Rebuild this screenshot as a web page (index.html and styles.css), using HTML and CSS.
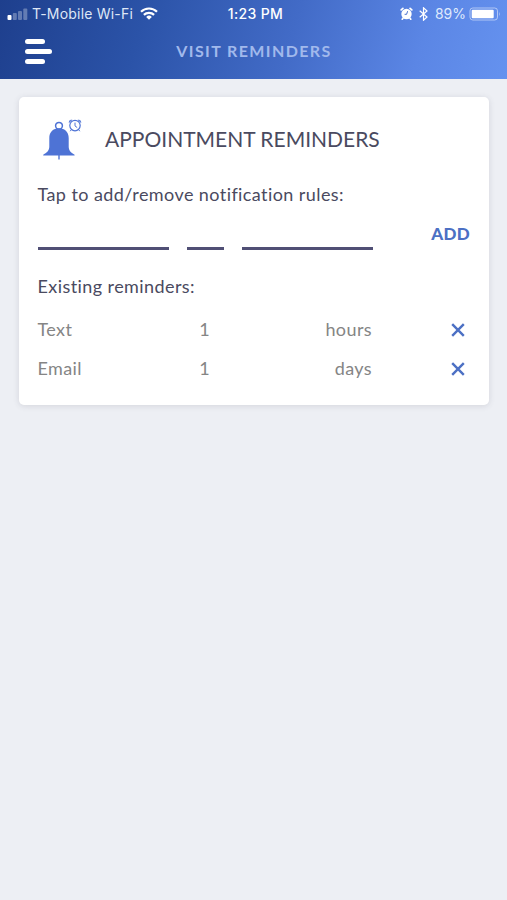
FILE: index.html
```html
<!DOCTYPE html>
<html lang="en">
<head>
<meta charset="utf-8">
<title>Visit Reminders</title>
<link rel="stylesheet" href="styles.css">
</head>
<body>
<header class="header">
  <div class="status">
    <div class="status-left">
      <svg class="signal" width="21" height="12" viewBox="0 0 21 12" fill="#fff"><rect x="0.5" y="7" width="4" height="5" rx="1"/><g opacity=".3"><rect x="5.800" y="5" width="4" height="7" rx="1"/><rect x="11" y="3" width="4" height="9" rx="1"/><rect x="16.300" y="0.500" width="4" height="11.500" rx="1"/></g></svg>
      <span class="carrier">T-Mobile Wi-Fi</span>
      <svg class="wifi" width="18" height="13" viewBox="0 0 18 13" fill="none" stroke="#fff" stroke-width="2.200"><path d="M1 4.800a11.300 11.300 0 0 1 16 0M3.900 7.900a7.200 7.200 0 0 1 10.200 0"/><path d="M9 12.700 6.200 9.900a4 4 0 0 1 5.600 0z" fill="#fff" stroke="none"/></svg>
    </div>
    <span class="time">1:23 PM</span>
    <div class="status-right">
      <svg class="alarm" width="13" height="13" viewBox="0 0 13 13"><circle cx="6.500" cy="7" r="5.200" fill="#fff"/><path d="M1.200 2.900 2.900 1.400M11.800 2.900 10.100 1.400M3 11.200l-.8 1M10 11.200l.8 1" stroke="#fff" stroke-width="1.700" stroke-linecap="round"/><path d="M7.600 4.200 6.600 7.300H4.600" fill="none" stroke="#4a72cf" stroke-width="1"/></svg>
      <svg class="bluetooth" width="9" height="14" viewBox="0 0 9 14" fill="none" stroke="#fff" stroke-width="1.200"><path d="M.700 3.700 8 10 4.500 13.200V.800L8 4 .700 10.300"/></svg>
      <span class="percent">89%</span>
      <svg class="battery" width="32" height="14" viewBox="0 0 32 14"><rect x="1" y="1" width="27.500" height="12" rx="2.800" fill="none" stroke="#fff" stroke-opacity=".5"/><rect x="2.700" y="2.800" width="22" height="8.400" rx="1" fill="#fff"/><path d="M30 4.700q1.600 2.300 0 4.600z" fill="#fff" opacity=".5"/></svg>
    </div>
  </div>
  <nav class="nav">
    <div class="menu"><i class="bar"></i><i class="bar bar-long"></i><i class="bar"></i></div>
    <h1 class="page-title">VISIT REMINDERS</h1>
  </nav>
</header>
<main class="card">
  <div class="card-head">
    <svg class="bell" width="42" height="44" viewBox="0 0 42 44" fill="none" stroke="#4e73d5"><circle cx="17" cy="8.800" r="3.400" stroke-width="1.500"/><path d="M17 11.300c6 0 9.700 4 9.700 9.800v8.500c0 3.600 1.700 6 5.900 8.200v.700H1.200v-.700c4.300-2.200 6.100-4.600 6.100-8.200v-8.500c0-5.800 3.700-9.800 9.700-9.800z" fill="#4e73d5" stroke="none"/><path d="M17 38v4.600" stroke-width="1.400"/><circle cx="33" cy="8.600" r="5.200" stroke-width="1.200"/><path d="M33 5.600v3.300l2.200 1.700M29.400 12.600l-1.200 1.600M36.600 12.600l1.200 1.600"/><path d="M27.200 5.600q-.500-2.600 2.700-2.700zM38.800 5.600q.500-2.600-2.700-2.700z" fill="#4e73d5" stroke-width=".6"/></svg>
    <h2 class="card-title">APPOINTMENT REMINDERS</h2>
  </div>
  <p class="label tap">Tap to add/remove notification rules:</p>
  <div class="fields">
    <span class="field"></span><span class="field"></span><span class="field"></span>
    <span class="add">ADD</span>
  </div>
  <p class="label existing">Existing reminders:</p>
  <div class="row"><span>Text</span><span class="num">1</span><span class="unit">hours</span><svg class="remove" width="14" height="14" viewBox="0 0 14 14"><path d="M1.200 1.200l11.600 11.600M12.800 1.200 1.200 12.800" stroke="#4c70c4" stroke-width="2.400"/></svg></div>
  <div class="row"><span>Email</span><span class="num">1</span><span class="unit">days</span><svg class="remove" width="14" height="14" viewBox="0 0 14 14"><path d="M1.200 1.200l11.600 11.600M12.800 1.200 1.200 12.800" stroke="#4c70c4" stroke-width="2.400"/></svg></div>
</main>
</body>
</html>
```
FILE: styles.css
```css
* { box-sizing: border-box; }
body {
  margin: 0;
  min-height: 900px;
  background: #edeff4;
  font-family: Lato, "Open Sans", sans-serif;
  color: #4a4a60;
}
h1, h2, p { margin: 0; font-weight: 400; white-space: nowrap; }
svg { display: block; flex: none; }
.header {
  height: 79px;
  background: linear-gradient(107deg, #1e3f8d 0%, #2b53a8 28%, #426bc7 57%, #5b86e5 82%, #6592ef 100%);
}
.status {
  height: 27px;
  display: grid;
  grid-template-columns: 1fr auto 1fr;
  align-items: center;
  padding: 0 7px;
  color: #fff;
  font: 14px/27px Inter, sans-serif;
}
.status-left, .status-right { display: flex; align-items: center; }
.status-right { justify-content: flex-end; margin-right: -1px; }
.carrier { margin-left: 4px; color: #dfe7f6; letter-spacing: .2px; }
.wifi { margin-left: 7px; }
.time { font-weight: 500; letter-spacing: .35px; margin-left: 4px; }
.bluetooth { margin-left: 6px; }
.percent { margin-left: 7px; color: #dfe9fd; }
.battery { margin-left: 3px; }
.nav {
  height: 52px;
  display: grid;
  grid-template-columns: 27px 1fr 27px;
  padding: 0 25px;
  align-items: center;
}
.menu { display: grid; gap: 5px; margin-top: -3px; }
.bar { width: 20px; height: 5px; border-radius: 3px; background: #fff; }
.bar-long { width: 27px; }
.page-title {
  text-align: center;
  font-size: 16px;
  line-height: 20px;
  font-weight: 700;
  letter-spacing: 1.4px;
  color: #a1b9ec;
  margin-top: -4px;
  padding-left: 1px;
}
.card {
  width: 470px;
  height: 308px;
  margin: 18px 0 0 19px;
  padding: 20px 18px 0;
  background: #fff;
  border-radius: 5px;
  box-shadow: 0 1px 6px rgba(60, 60, 80, .14);
}
.card-head { display: flex; align-items: center; height: 44px; }
.bell { margin-left: 5px; }
.card-title { margin-left: 21px; font-size: 21px; line-height: 26px; letter-spacing: 0; }
.label { font-size: 18px; line-height: 24px; letter-spacing: .42px; padding-left: .5px; }
.tap { margin-top: 21px; }
.fields {
  display: grid;
  grid-template-columns: 131px 37px 131px 1fr;
  column-gap: 18px;
  height: 44px;
  padding-left: .5px;
}
.field { border-bottom: 3px solid #504f75; }
.add { text-align: right; font-size: 17px; font-weight: 900; line-height: 24px; letter-spacing: .3px; color: #4c70c4; margin-top: 16px; margin-right: 1px; }
.existing { margin-top: 24px; }
.row {
  display: grid;
  grid-template-columns: 131px 73px 131px 93px;
  height: 39px;
  align-items: center;
  font-size: 18px;
  letter-spacing: .4px;
  color: #858585;
}
.row span { padding: 0 0 2px .5px; }
.existing + .row { margin-top: 12px; }
.num { text-align: center; }
.unit { text-align: right; }
.remove { justify-self: end; }
```
